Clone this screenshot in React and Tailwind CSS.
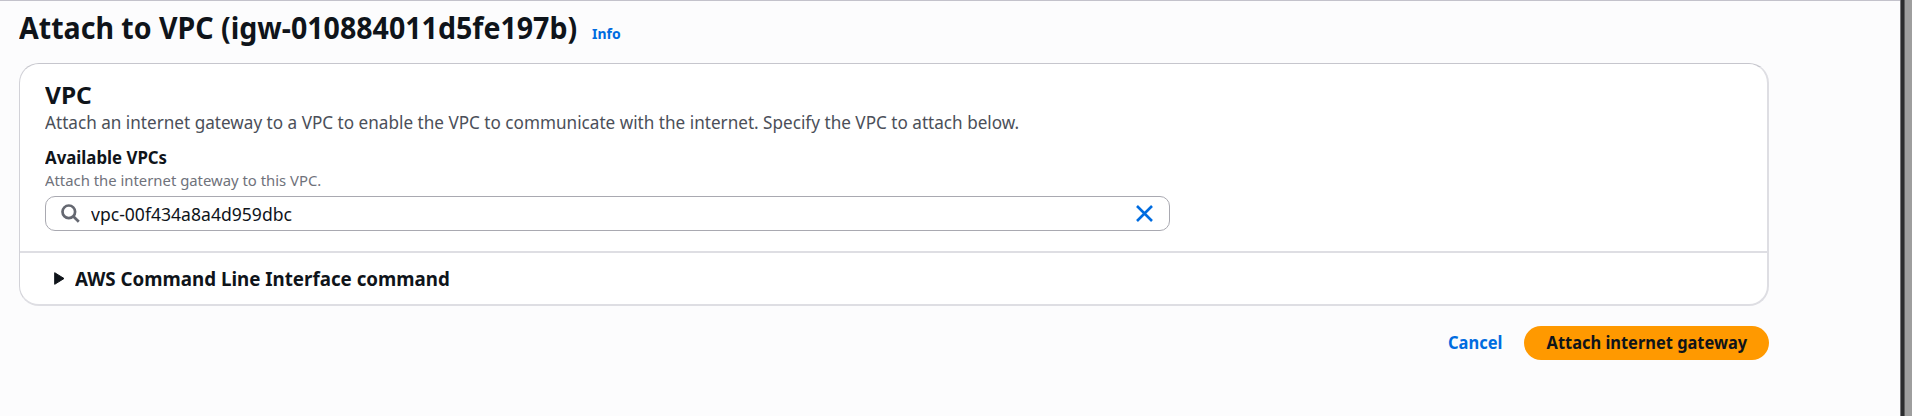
import React from "react";

export default function App() {
  return (
    <div className="flex h-[416px] w-[1912px] overflow-hidden bg-[#fcfcfd] font-['Noto_Sans','Open_Sans',sans-serif] text-[#0f141a]">
      <main className="h-full w-[1900px] border-t border-[#c3c2cb] pl-[19.4px]">
        <header className="flex h-[62px] items-baseline pt-[8px]">
          <h1 className="w-[573px] whitespace-nowrap text-[29.5px] leading-[38px] font-bold">
            <span className="inline-block origin-left scale-x-[0.968]">Attach to VPC (igw-010884011d5fe197b)</span>
          </h1>
          <a className="whitespace-nowrap text-[15px] leading-5 font-bold text-[#006ce0]">
            <span className="inline-block origin-left scale-x-[0.93]">Info</span>
          </a>
        </header>

        <section className="h-[243px] w-[1750px] rounded-[20px] border-t border-r-2 border-b-2 border-l border-[#dedee3] border-t-[#c6c6cd] border-l-[#d2d2d8] bg-white">
          <div className="h-[189px] border-b-2 border-[#dedee3] pt-[17px] pl-[24.6px]">
            <h2 className="h-7 whitespace-nowrap text-[24px] leading-7 font-bold">
              <span className="inline-block origin-left scale-x-[1.02]">VPC</span>
            </h2>
            <p className="mt-px h-6 whitespace-nowrap text-[17.5px] leading-6 text-[#4b4f59]">
              <span className="inline-block origin-left scale-x-[0.979]">
                Attach an internet gateway to a VPC to enable the VPC to communicate with the internet. Specify the VPC to attach below.
              </span>
            </p>
            <p className="mt-3 h-6 whitespace-nowrap text-[17px] leading-6 font-bold">
              <span className="inline-block origin-left scale-x-[0.989]">Available VPCs</span>
            </p>
            <p className="h-5 whitespace-nowrap text-[15px] leading-5 text-[#6f727b]">
              <span className="inline-block origin-left scale-x-[0.99]">Attach the internet gateway to this VPC.</span>
            </p>
            <div className="mt-[6px] flex h-[35px] w-[1125px] items-center rounded-[10px] border-[1.5px] border-[#a9a9b1] pr-[15.5px] pl-[15px]">
              <svg className="h-[19px] w-[19px] shrink-0" viewBox="0 0 19 19" fill="none" stroke="#656871" strokeWidth="2.7">
                <circle cx="7.8" cy="7.8" r="6.3" />
                <path d="M12.2 12.2 17.8 17.8" />
              </svg>
              <span className="ml-[11.5px] grow whitespace-nowrap text-[17.5px] leading-6">
                <span className="inline-block origin-left scale-x-[1.004]">vpc-00f434a8a4d959dbc</span>
              </span>
              <svg className="h-[17px] w-[17px] shrink-0" viewBox="0 0 17 17" fill="none" stroke="#006ce0" strokeWidth="2.6">
                <path d="M1 1 16 16M16 1 1 16" />
              </svg>
            </div>
          </div>
          <div className="flex h-[51px] items-center pl-[33.6px]">
            <svg className="h-[13px] w-[11px]" viewBox="0 0 11 13" fill="#0f141a" stroke="#0f141a" strokeWidth="1" strokeLinejoin="round">
              <path d="M.7.7 10 6.5.7 12.3Z" />
            </svg>
            <span className="ml-[10px] whitespace-nowrap text-[19.5px] leading-6 font-bold">
              <span className="inline-block origin-left scale-x-[0.961]">AWS Command Line Interface command</span>
            </span>
          </div>
        </section>

        <footer className="mt-[19px] flex h-[35px] w-[1750px] items-center justify-end">
          <a className="mr-[22px] w-[54.5px] whitespace-nowrap text-[17px] leading-6 font-bold text-[#006ce0]">
            <span className="inline-block origin-left scale-x-[0.97]">Cancel</span>
          </a>
          <button className="flex h-[34px] w-[245px] items-center justify-center rounded-full bg-[#ff9900] text-[17px] leading-6 font-bold whitespace-nowrap">
            <span className="inline-block scale-x-[0.966]">Attach internet gateway</span>
          </button>
        </footer>
      </main>
      <aside className="flex grow">
        <div className="h-full w-px bg-[#77777a]" />
        <div className="h-full w-[3px] bg-[#2b2c2e]" />
        <div className="h-full w-px bg-[#5f5f60]" />
        <div className="h-full grow bg-[#9e9e9e]" />
      </aside>
    </div>
  );
}
